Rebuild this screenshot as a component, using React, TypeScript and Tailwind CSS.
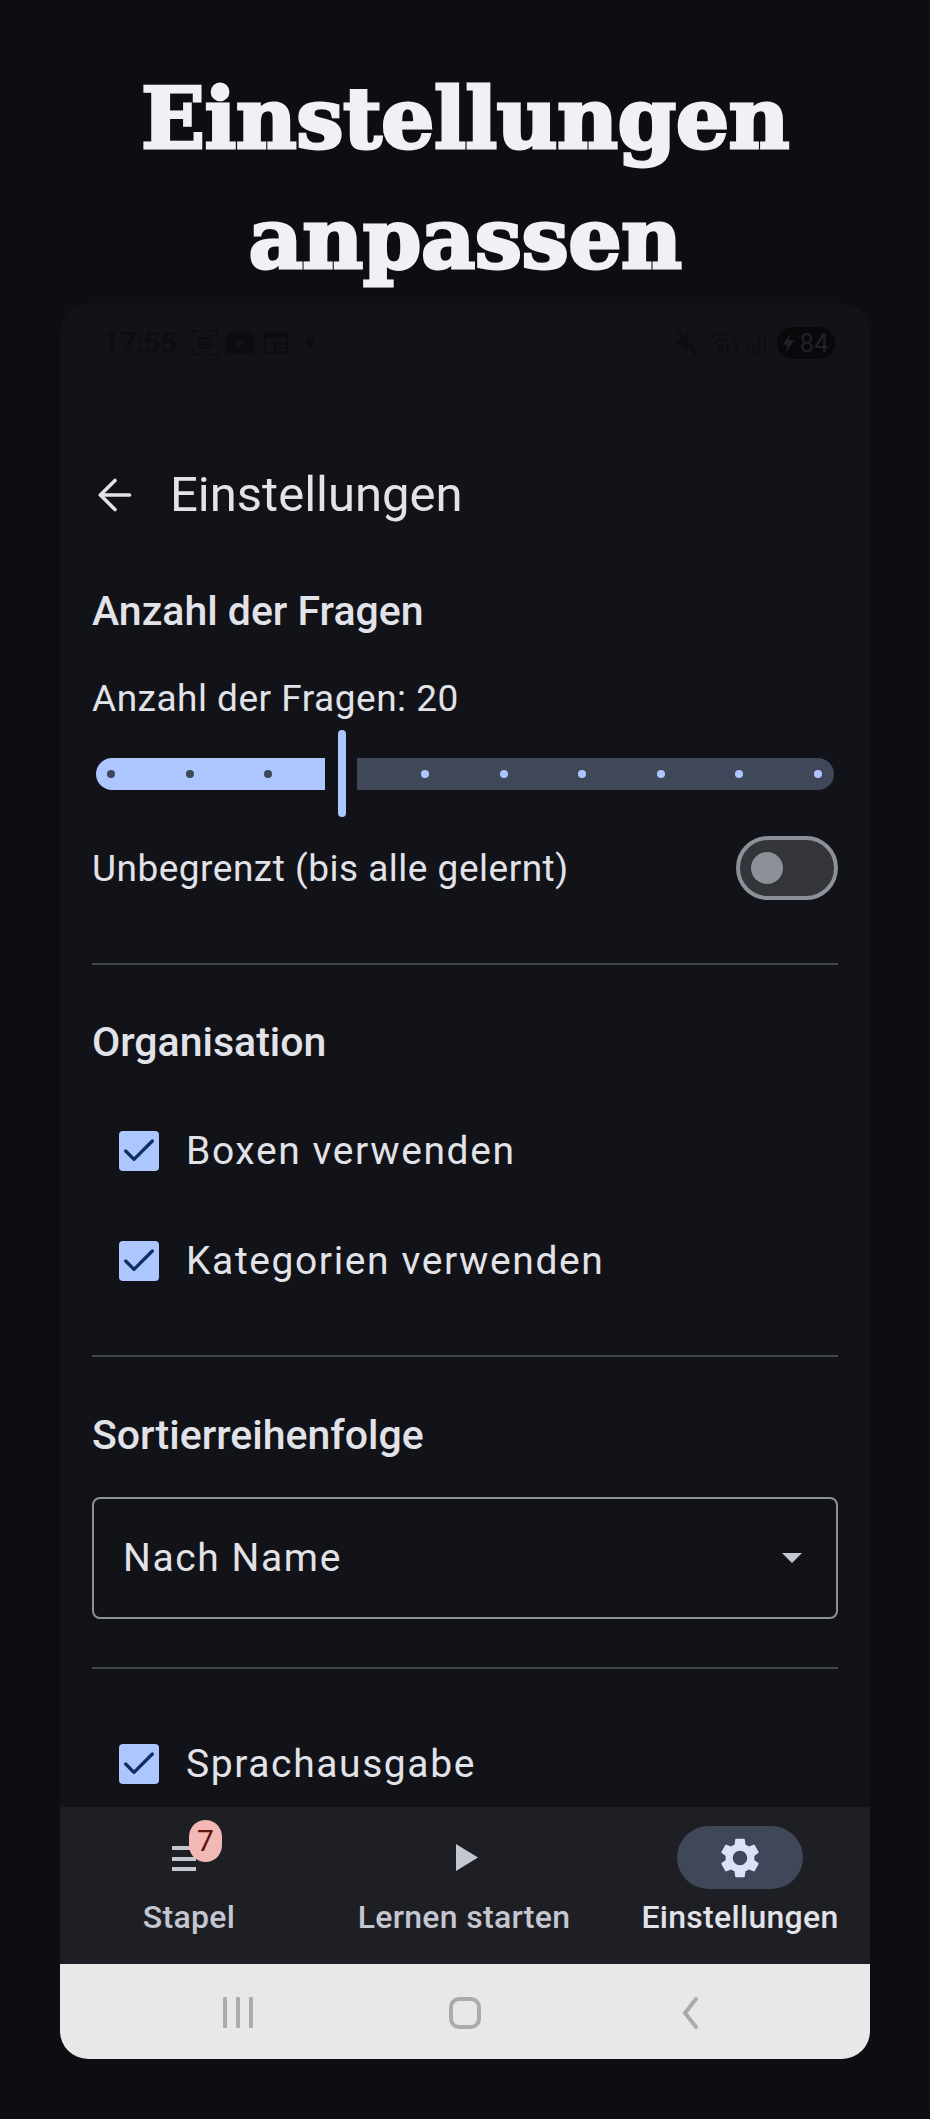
import { ArrowLeft, Check } from 'lucide-react';
import { MdSettings } from 'react-icons/md';

const dotsOn = [0, 1, 2];
const dotsOff = [0, 1, 2, 3, 4, 5];

function CheckRow({ label }: { label: string }) {
  return (
    <div className="flex h-[110px] items-center pl-[27px]">
      <div className="flex h-10 w-10 items-center justify-center rounded-[4px] bg-[#adc6ff]">
        <Check size={42} strokeWidth={2} className="text-[#102f60]" />
      </div>
      <span className="ml-[27px] text-[39px] leading-none tracking-[1.6px] text-[#e2e2e9]">{label}</span>
    </div>
  );
}

function StatusBar() {
  return (
    <div className="flex h-[78px] items-center justify-between pl-[43px] pr-[35px] pt-[2px] text-[#0c0d11]">
      <div className="flex items-center">
        <span className="text-[29px] leading-none font-medium">17:55</span>
        <svg width="26" height="26" viewBox="0 0 26 26" fill="none" stroke="currentColor" strokeWidth="2" className="ml-[15px]">
          <path d="M1 7V3a2 2 0 0 1 2-2h4M19 1h4a2 2 0 0 1 2 2v4M25 19v4a2 2 0 0 1-2 2h-4M7 25H3a2 2 0 0 1-2-2v-4" />
          <rect x="7" y="8" width="12" height="10" rx="2" />
          <path d="M9 16l3-4 2 2 2-3 1 5z" fill="currentColor" stroke="none" />
        </svg>
        <svg width="29" height="21" viewBox="0 0 29 21" fill="currentColor" className="ml-[8px]">
          <path fillRule="evenodd" d="M5 0h19a5 5 0 0 1 5 5v11a5 5 0 0 1-5 5H5a5 5 0 0 1-5-5V5a5 5 0 0 1 5-5zm6 5v11l9-5.500z" />
        </svg>
        <svg width="24" height="22" viewBox="0 0 24 22" fill="none" stroke="currentColor" strokeWidth="2" className="ml-[9px]">
          <rect x="1" y="1" width="22" height="20" />
          <rect x="1" y="1" width="22" height="5" fill="currentColor" stroke="none" />
          <path d="M11 9v12M11 12h12M11 16h12" />
        </svg>
        <span className="ml-[18px] h-[8px] w-[8px] rounded-full bg-current" />
      </div>
      <div className="flex items-center">
        <svg width="21" height="24" viewBox="0 0 21 24" fill="currentColor">
          <path d="M1 8h4l7-7v20l-7-6H1z" />
          <path d="M3 1l17 22" stroke="currentColor" strokeWidth="3" />
        </svg>
        <svg width="31" height="22" viewBox="0 0 31 22" fill="none" stroke="currentColor" strokeWidth="2" className="ml-[12px]">
          <path d="M1 7c6-6 13-6 18-3M5 11c4-4 9-4 13-2M9 15c2-2 4-2 6-1" />
          <circle cx="12" cy="19" r="2" fill="currentColor" stroke="none" />
          <path d="M19 11v10M27 21V11" />
          <text x="22" y="9" fontSize="11" fill="currentColor" stroke="none" fontFamily="Roboto, sans-serif">6</text>
        </svg>
        <svg width="21" height="22" viewBox="0 0 21 22" fill="currentColor" className="ml-[6px] opacity-70">
          <rect x="0" y="17" width="3" height="5" />
          <rect x="6" y="11" width="3" height="11" />
          <rect x="12" y="5" width="2" height="17" />
          <rect x="18" y="0" width="2" height="22" />
        </svg>
        <div className="ml-[10px] flex h-8 w-[58px] items-center justify-center gap-[5px] overflow-hidden rounded-full bg-[#08090b] text-[#202227]">
          <svg width="11" height="20" viewBox="0 0 12 22" fill="currentColor">
            <path d="M8 0L0 13h5l-2 9 9-14H6z" />
          </svg>
          <span className="text-[26px] leading-none">84</span>
        </div>
      </div>
    </div>
  );
}

function SliderRow() {
  return (
    <div className="mt-[6px] flex h-[87px] items-center pl-1">
      <div className="flex h-8 w-[229px] items-center justify-between rounded-l-full rounded-r-[4px] bg-[#adc6ff] pl-[11px] pr-[53px]">
        {dotsOn.map((d) => (
          <span key={d} className="h-2 w-2 rounded-full bg-[#3f4759]" />
        ))}
      </div>
      <div className="ml-[13px] h-[87px] w-2 rounded-full bg-[#adc6ff]" />
      <div className="ml-[11px] flex h-8 w-[477px] items-center justify-between rounded-l-[4px] rounded-r-full bg-[#3f4759] pl-[64px] pr-[12px]">
        {dotsOff.map((d) => (
          <span key={d} className="h-2 w-2 rounded-full bg-[#adc6ff]" />
        ))}
      </div>
    </div>
  );
}

function NavBar() {
  return (
    <div className="flex h-[157px] items-start justify-between bg-[#1e1f25] px-8 pt-[19px]">
      <div className="flex w-[194px] flex-col items-center">
        <div className="relative flex h-[63px] w-[126px] items-center justify-center">
          <svg width="24" height="26" viewBox="0 0 24 26" fill="#c4c6d0" className="mr-[10px]">
            <rect x="0" y="1" width="24" height="4" />
            <rect x="0" y="12" width="24" height="4" />
            <rect x="0" y="22" width="24" height="4" />
          </svg>
          <span className="absolute left-[63px] top-[-6px] flex h-[42px] w-[33px] items-center justify-center rounded-full bg-[#f2b8b5] text-[30px] leading-none text-[#601410]">7</span>
        </div>
        <span className="mt-[1px] text-[32px] leading-[54px] font-medium tracking-[0.3px] text-[#c4c6d0]">Stapel</span>
      </div>
      <div className="flex w-[213px] flex-col items-center">
        <div className="flex h-[63px] w-[126px] items-center justify-center">
          <svg width="22" height="27" viewBox="0 0 22 27" fill="#c4c6d0" className="ml-[5px]">
            <path d="M0 0l22 13.500L0 27z" />
          </svg>
        </div>
        <span className="mt-[1px] text-[32px] leading-[54px] font-medium tracking-[0.3px] whitespace-nowrap text-[#c4c6d0]">Lernen starten</span>
      </div>
      <div className="flex w-[196px] flex-col items-center">
        <div className="flex h-[63px] w-[126px] items-center justify-center rounded-full bg-[#3f4759]">
          <MdSettings size={48} className="text-[#dae2f9]" />
        </div>
        <span className="mt-[1px] text-[32px] leading-[54px] font-medium tracking-[0.3px] whitespace-nowrap text-[#e2e2e9]">Einstellungen</span>
      </div>
    </div>
  );
}

export default function App() {
  return (
    <div className="flex h-[2119px] flex-col overflow-hidden bg-[#0d0e12] font-['Roboto',sans-serif]">
      <h1 className="mt-[59px] text-center font-['DejaVu_Serif',serif] text-[84px] leading-[120px] font-black tracking-[-0.6px] text-[#f0f1f5] [-webkit-text-stroke:3px_#f0f1f5]">
        Einstellungen
        <br />
        anpassen
      </h1>
      <div className="mx-[60px] mb-[60px] mt-[4px] flex min-h-0 flex-1 flex-col overflow-hidden rounded-[28px] bg-[#111318]">
        <StatusBar />
        <div className="min-h-0 flex-1 overflow-hidden px-8">
          <div className="mt-[84px] flex h-[60px] items-center text-[#e2e2e9]">
            <ArrowLeft size={50} strokeWidth={1.7} className="ml-[-2px]" />
            <span className="ml-[30px] text-[49px] leading-[60px]">Einstellungen</span>
          </div>
          <h2 className="mt-[61px] text-[41px] leading-[50px] font-medium text-[#e2e2e9]">Anzahl der Fragen</h2>
          <div className="mt-[38px] text-[37px] leading-[50px] tracking-[0.5px] text-[#e2e2e9]">Anzahl der Fragen: 20</div>
          <SliderRow />
          <div className="mt-[19px] flex h-16 items-center justify-between">
            <span className="text-[37px] leading-none tracking-[0.5px] text-[#e2e2e9]">Unbegrenzt (bis alle gelernt)</span>
            <div className="flex h-16 w-[102px] items-center rounded-full border-[4px] border-[#8e9099] bg-[#33353a] pl-[11px]">
              <span className="h-8 w-8 rounded-full bg-[#8e9099]" />
            </div>
          </div>
          <div className="mt-[63px] h-[2px] bg-[#44474f]" />
          <h2 className="mt-[52px] text-[41px] leading-[50px] font-medium text-[#e2e2e9]">Organisation</h2>
          <div className="mt-[29px]">
            <CheckRow label="Boxen verwenden" />
            <CheckRow label="Kategorien verwenden" />
          </div>
          <div className="mt-[39px] h-[2px] bg-[#44474f]" />
          <h2 className="mt-[53px] text-[41px] leading-[50px] font-medium text-[#e2e2e9]">Sortierreihenfolge</h2>
          <div className="mt-[37px] flex h-[122px] items-center justify-between rounded-[8px] border-2 border-[#8e9099] pl-[29px] pr-[34px]">
            <span className="text-[39px] leading-none tracking-[1.6px] text-[#e2e2e9]">Nach Name</span>
            <svg width="20" height="10" viewBox="0 0 20 10" fill="#c4c6d0">
              <path d="M0 0h20L10 10z" />
            </svg>
          </div>
          <div className="mt-[48px] h-[2px] bg-[#44474f]" />
          <div className="mt-[40px]">
            <CheckRow label="Sprachausgabe" />
          </div>
        </div>
        <NavBar />
        <div className="flex h-[95px] items-center justify-between border-t-2 border-[#e8e8e8] bg-[#e8e8e8] pl-[163px] pr-[169px] text-[#ababab]">
          <svg width="30" height="31" viewBox="0 0 30 31" fill="currentColor">
            <rect x="0" y="0" width="4" height="31" rx="1" />
            <rect x="13" y="0" width="4" height="31" rx="1" />
            <rect x="26" y="0" width="4" height="31" rx="1" />
          </svg>
          <div className="mr-[4px] h-[32px] w-[32px] rounded-[10px] border-[4px] border-[#ababab]" />
          <svg width="20" height="32" viewBox="0 0 20 32" fill="none" stroke="currentColor" strokeWidth="4" strokeLinecap="round" strokeLinejoin="round">
            <path d="M15 2L4 16l11 14" />
          </svg>
        </div>
      </div>
    </div>
  );
}
